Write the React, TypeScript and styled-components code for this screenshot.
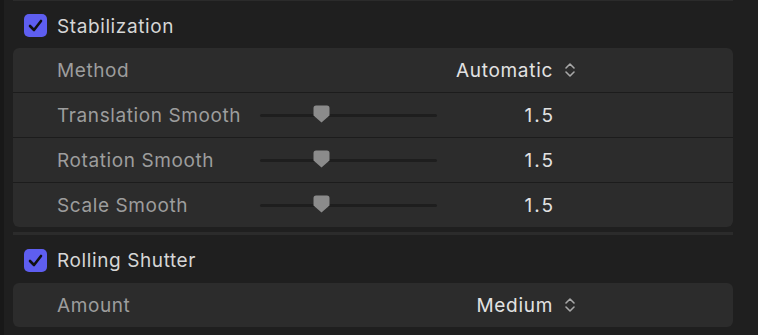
import React from 'react'
import styled, { createGlobalStyle } from 'styled-components'

const GlobalStyle = createGlobalStyle`
  html, body {
    margin: 0;
    padding: 0;
    background: #242424;
  }
  body {
    font-family: Inter, "Liberation Sans", sans-serif;
    -webkit-font-smoothing: antialiased;
  }
`

const Inspector = styled.div`
  width: 751px;
  height: 335px;
  overflow: hidden;
  background: #1f1f1f;
  border-left: 4px solid #181818;
  border-right: 1px solid #8e8e8e;
  padding-left: 9px;
  box-sizing: content-box;
`

const Rule = styled.div<{ $thick?: boolean; $gap?: number }>`
  width: 720px;
  height: ${(p) => (p.$thick ? 3 : 1)}px;
  margin-top: ${(p) => p.$gap ?? 0}px;
  background: #2b2b2b;
`

const Header = styled.label<{ $height: number }>`
  display: flex;
  align-items: center;
  gap: 10px;
  height: ${(p) => p.$height}px;
  padding-left: 11px;
  color: #d6d6d6;
  font-size: 19px;
  letter-spacing: 0.6px;
`

const Title = styled.span`
  padding-top: 3px;
`

const Check = styled.span`
  display: flex;
  align-items: center;
  justify-content: center;
  width: 23px;
  height: 23px;
  margin-top: 2px;
  border-radius: 5px;
  background: #5e5ef0;
`

const Panel = styled.div`
  width: 720px;
  display: flex;
  flex-direction: column;
  gap: 1px;
  background: #1c1c1c;
  border-radius: 6px;
  overflow: hidden;
`

const Row = styled.div`
  display: grid;
  grid-template-columns: 203px 177px 116px auto;
  align-items: center;
  height: 44px;
  padding-left: 44px;
  background: #2c2c2c;
`

const Label = styled.span`
  color: #9d9d9d;
  font-size: 19px;
  letter-spacing: 0.6px;
`

const Value = styled.span<{ $numeric?: boolean }>`
  color: #e2e2e2;
  font-size: 19px;
  text-align: right;
  letter-spacing: ${(p) => (p.$numeric ? 2 : 0.7)}px;
  margin-right: ${(p) => (p.$numeric ? -2 : 0)}px;
`

const Stepper = styled.span`
  display: flex;
  margin-left: 10px;
`

const Track = styled.div`
  position: relative;
  height: 3px;
  border-radius: 2px;
  background: #1e1e1e;
`

const Knob = styled.svg`
  position: absolute;
  top: -9px;
  width: 17px;
  height: 18px;
`

const CheckMark = () => (
  <svg width="15" height="13" viewBox="0 0 15 13">
    <path d="M2 7l4 4L13 2" fill="none" stroke="#111" strokeWidth="2.6" strokeLinecap="round" strokeLinejoin="round" />
  </svg>
)

const UpDown = () => (
  <svg width="14" height="18" viewBox="0 0 14 18">
    <path d="M3 7l4-4 4 4M3 11l4 4 4-4" fill="none" stroke="#a8a8a8" strokeWidth="1.6" strokeLinecap="round" strokeLinejoin="round" />
  </svg>
)

const Slider = ({ value, max }: { value: number; max: number }) => (
  <Track>
    <Knob viewBox="0 0 17 18" style={{ left: `${(value / max) * 177}px` }}>
      <path d="M3 0.5h11a2.5 2.5 0 0 1 2.5 2.5v7.5L8.5 17.5L0.5 10.5V3A2.5 2.5 0 0 1 3 0.5z" fill="#8b8b8b" />
    </Knob>
  </Track>
)

type Param = { label: string; value: string; slider?: number; popup?: boolean }

const ParamRow = ({ label, value, slider, popup }: Param) => (
  <Row>
    <Label>{label}</Label>
    {slider !== undefined ? <Slider value={slider} max={5} /> : <span />}
    <Value $numeric={slider !== undefined}>{value}</Value>
    {popup ? (
      <Stepper>
        <UpDown />
      </Stepper>
    ) : (
      <span />
    )}
  </Row>
)

const stabilization: Param[] = [
  { label: 'Method', value: 'Automatic', popup: true },
  { label: 'Translation Smooth', value: '1.5', slider: 1.5 },
  { label: 'Rotation Smooth', value: '1.5', slider: 1.5 },
  { label: 'Scale Smooth', value: '1.5', slider: 1.5 },
]

const rolling: Param[] = [{ label: 'Amount', value: 'Medium', popup: true }]

const Section = ({ title, params, height }: { title: string; params: Param[]; height: number }) => (
  <>
    <Header $height={height}>
      <Check>
        <CheckMark />
      </Check>
      <Title>{title}</Title>
    </Header>
    <Panel>
      {params.map((p) => (
        <ParamRow key={p.label} {...p} />
      ))}
    </Panel>
  </>
)

export default function App() {
  return (
    <>
      <GlobalStyle />
      <Inspector>
        <Rule />
        <Section title="Stabilization" params={stabilization} height={47} />
        <Rule $thick $gap={5} />
        <Section title="Rolling Shutter" params={rolling} height={48} />
      </Inspector>
    </>
  )
}
